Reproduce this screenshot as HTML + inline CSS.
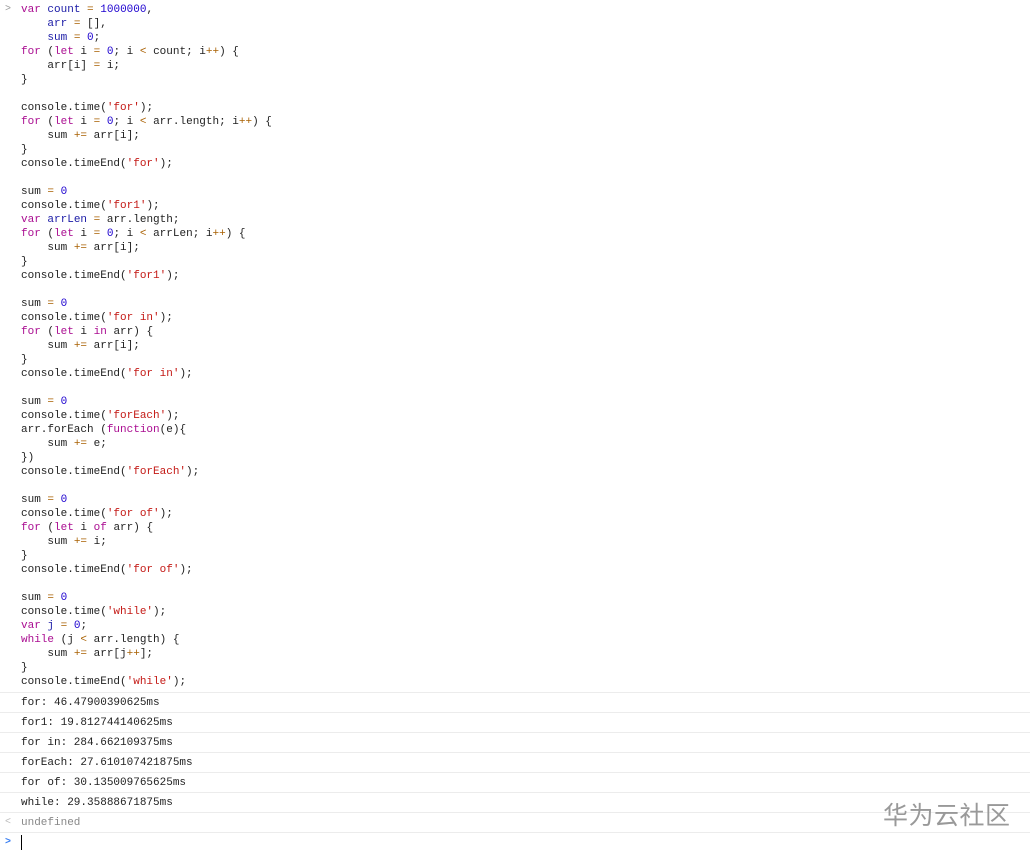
<!DOCTYPE html><html><head><style>
body{margin:0;width:1030px;height:856px;background:#fff;overflow:hidden;font-family:"Liberation Mono","DejaVu Sans Mono",monospace;font-size:11px;color:#222;position:relative}
pre{margin:0;font:inherit;line-height:14px;position:absolute;left:21px;top:3px}
.k{color:#aa0d91}.n{color:#1c00cf}.s{color:#c41a16}.v{color:#1a1aa6}.o{color:#a85f00}
.row{position:absolute;left:0;width:1030px;height:20px;border-top:1px solid #ececec;line-height:20px}
.row span{position:absolute;left:21px}
.arr{position:absolute;left:5px;color:#999;font-size:10px}
.wm{position:absolute;left:883px;top:796px;font-family:"Noto Sans CJK SC",sans-serif;font-size:25px;color:#999;letter-spacing:0.5px}
</style></head><body>
<div class="arr" style="top:4px">&gt;</div>
<pre><span class="k">var</span> <span class="v">count</span> <span class="o">=</span> <span class="n">1000000</span>,
    <span class="v">arr</span> <span class="o">=</span> [],
    <span class="v">sum</span> <span class="o">=</span> <span class="n">0</span>;
<span class="k">for</span> (<span class="k">let</span> i <span class="o">=</span> <span class="n">0</span>; i <span class="o">&lt;</span> count; i<span class="o">++</span>) {
    arr[i] <span class="o">=</span> i;
}

console.time(<span class="s">'for'</span>);
<span class="k">for</span> (<span class="k">let</span> i <span class="o">=</span> <span class="n">0</span>; i <span class="o">&lt;</span> arr.length; i<span class="o">++</span>) {
    sum <span class="o">+=</span> arr[i];
}
console.timeEnd(<span class="s">'for'</span>);

sum <span class="o">=</span> <span class="n">0</span>
console.time(<span class="s">'for1'</span>);
<span class="k">var</span> <span class="v">arrLen</span> <span class="o">=</span> arr.length;
<span class="k">for</span> (<span class="k">let</span> i <span class="o">=</span> <span class="n">0</span>; i <span class="o">&lt;</span> arrLen; i<span class="o">++</span>) {
    sum <span class="o">+=</span> arr[i];
}
console.timeEnd(<span class="s">'for1'</span>);

sum <span class="o">=</span> <span class="n">0</span>
console.time(<span class="s">'for in'</span>);
<span class="k">for</span> (<span class="k">let</span> i <span class="k">in</span> arr) {
    sum <span class="o">+=</span> arr[i];
}
console.timeEnd(<span class="s">'for in'</span>);

sum <span class="o">=</span> <span class="n">0</span>
console.time(<span class="s">'forEach'</span>);
arr.forEach (<span class="k">function</span>(e){
    sum <span class="o">+=</span> e;
})
console.timeEnd(<span class="s">'forEach'</span>);

sum <span class="o">=</span> <span class="n">0</span>
console.time(<span class="s">'for of'</span>);
<span class="k">for</span> (<span class="k">let</span> i <span class="k">of</span> arr) {
    sum <span class="o">+=</span> i;
}
console.timeEnd(<span class="s">'for of'</span>);

sum <span class="o">=</span> <span class="n">0</span>
console.time(<span class="s">'while'</span>);
<span class="k">var</span> <span class="v">j</span> <span class="o">=</span> <span class="n">0</span>;
<span class="k">while</span> (j <span class="o">&lt;</span> arr.length) {
    sum <span class="o">+=</span> arr[j<span class="o">++</span>];
}
console.timeEnd(<span class="s">'while'</span>);</pre>
<div class="row" style="top:692px"><span>for: 46.47900390625ms</span></div>
<div class="row" style="top:712px"><span>for1: 19.812744140625ms</span></div>
<div class="row" style="top:732px"><span>for in: 284.662109375ms</span></div>
<div class="row" style="top:752px"><span>forEach: 27.610107421875ms</span></div>
<div class="row" style="top:772px"><span>for of: 30.135009765625ms</span></div>
<div class="row" style="top:792px"><span>while: 29.35888671875ms</span></div>
<div class="row" style="top:812px;color:#888"><b class="arr" style="font-weight:normal;color:#bbb">&lt;</b><span>undefined</span></div>
<div class="row" style="top:832px"><b class="arr" style="font-weight:bold;color:#367cf1">&gt;</b><span style="top:2px;width:1px;height:15px;background:#000"></span></div>
<div class="wm">华为云社区</div>
</body></html>
